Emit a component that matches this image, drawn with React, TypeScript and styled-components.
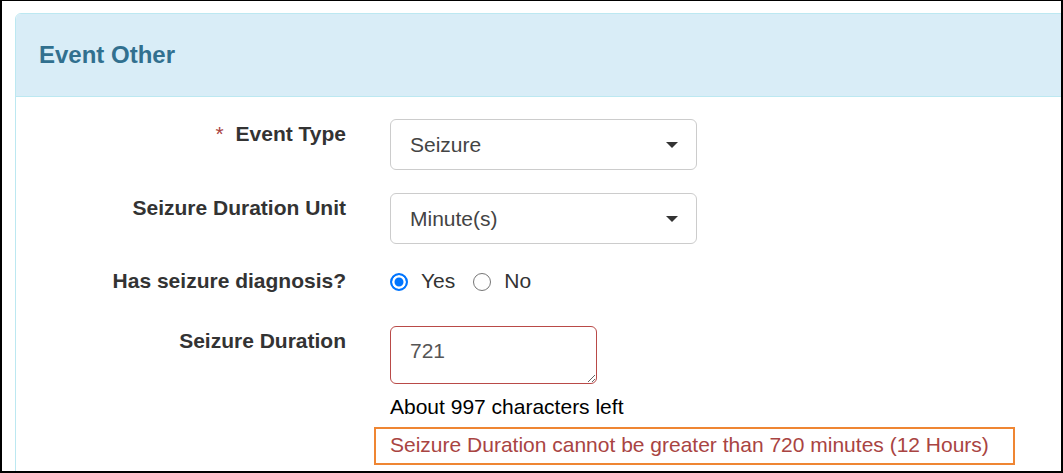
import React from "react";
import styled, { createGlobalStyle } from "styled-components";

const Global = createGlobalStyle`
  html, body { margin: 0; padding: 0; }
  body {
    width: 1063px;
    height: 473px;
    overflow: hidden;
    background: #fff;
    font-family: "Liberation Sans", Arial, Helvetica, sans-serif;
  }
  * { box-sizing: border-box; }
`;

const Frame = styled.div`
  width: 1063px;
  height: 473px;
  border-style: solid;
  border-color: #000;
  border-width: 1px 2px 2px 2px;
  background: #fff;
  overflow: hidden;
  padding: 12px 0 0 13px;
`;

const Panel = styled.section`
  width: 1120px;
  height: 600px;
  border: 1px solid #bce8f1;
  border-radius: 6px 6px 0 0;
  background: #fff;
`;

const Heading = styled.header`
  height: 83px;
  display: flex;
  align-items: center;
  padding: 0 23px;
  background: #d9edf7;
  border-bottom: 1px solid #bce8f1;
  border-radius: 5px 5px 0 0;
`;

const Title = styled.h3`
  margin: 0;
  font-size: 24px;
  font-weight: bold;
  color: #31708f;
  line-height: 30px;
`;

const Body = styled.div`
  padding-top: 22px;
`;

const Row = styled.div<{ $gap: number }>`
  display: flex;
  gap: 44px;
  margin-bottom: ${(p) => p.$gap}px;
`;

const Label = styled.label`
  width: 330px;
  flex: none;
  text-align: right;
  font-size: 21px;
  line-height: 30px;
  font-weight: bold;
  color: #333;
`;

const Required = styled.span`
  color: #a94442;
  font-weight: normal;
  margin-right: 6px;
`;

const Control = styled.div`
  display: flex;
  flex-direction: column;
  align-items: flex-start;
`;

const SelectBox = styled.div`
  width: 307px;
  height: 51px;
  display: flex;
  align-items: center;
  justify-content: space-between;
  padding: 0 18px 0 19px;
  border: 1px solid #ccc;
  border-radius: 6px;
  background: #fff;
  font-size: 21px;
  color: #444;
`;

const Caret = styled.span`
  width: 0;
  height: 0;
  border-left: 6px solid transparent;
  border-right: 6px solid transparent;
  border-top: 6px solid #333;
  margin-top: 1px;
`;

const RadioGroup = styled.div`
  display: flex;
  align-items: center;
  height: 30px;
  font-size: 21px;
  color: #333;
`;

const RadioOption = styled.label<{ $last?: boolean }>`
  display: flex;
  align-items: center;
  gap: 13px;
  margin-right: ${(p) => (p.$last ? 0 : 18)}px;
`;

const RadioDot = styled.span<{ $checked?: boolean }>`
  width: 18px;
  height: 18px;
  border-radius: 50%;
  margin-top: 2px;
  ${(p) =>
    p.$checked
      ? `border: 2px solid #0075ff; background: #0075ff; box-shadow: inset 0 0 0 2.5px #fff;`
      : `border: 1.5px solid #767676; background: #fff;`}
`;

const TextArea = styled.textarea`
  width: 207px;
  height: 58px;
  padding: 9px 19px;
  border: 1px solid #b94a48;
  border-radius: 6px;
  font-family: "Liberation Sans", Arial, Helvetica, sans-serif;
  font-size: 21px;
  line-height: 30px;
  color: #555;
  background: #fff;
  outline: none;
  margin: 0;
`;

const Help = styled.div`
  margin-top: 8px;
  font-size: 21px;
  line-height: 30px;
  color: #000;
`;

const ErrorNote = styled.div`
  margin-top: 5px;
  margin-left: -16px;
  width: 641px;
  height: 38px;
  padding: 0 14px;
  border: 2px solid #ef8633;
  font-size: 21px;
  line-height: 32px;
  color: #a94442;
`;

export default function App() {
  return (
    <>
      <Global />
      <Frame>
        <Panel>
          <Heading>
            <Title>Event Other</Title>
          </Heading>
          <Body>
            <Row $gap={23}>
              <Label>
                <Required>*</Required> Event Type
              </Label>
              <Control>
                <SelectBox>
                  <span>Seizure</span>
                  <Caret />
                </SelectBox>
              </Control>
            </Row>
            <Row $gap={22}>
              <Label>Seizure Duration Unit</Label>
              <Control>
                <SelectBox>
                  <span>Minute(s)</span>
                  <Caret />
                </SelectBox>
              </Control>
            </Row>
            <Row $gap={30}>
              <Label>Has seizure diagnosis?</Label>
              <Control>
                <RadioGroup>
                  <RadioOption>
                    <RadioDot $checked />
                    Yes
                  </RadioOption>
                  <RadioOption $last>
                    <RadioDot />
                    No
                  </RadioOption>
                </RadioGroup>
              </Control>
            </Row>
            <Row $gap={0}>
              <Label>Seizure Duration</Label>
              <Control>
                <TextArea defaultValue="721" />
                <Help>About 997 characters left</Help>
                <ErrorNote>
                  Seizure Duration cannot be greater than 720 minutes (12 Hours)
                </ErrorNote>
              </Control>
            </Row>
          </Body>
        </Panel>
      </Frame>
    </>
  );
}
